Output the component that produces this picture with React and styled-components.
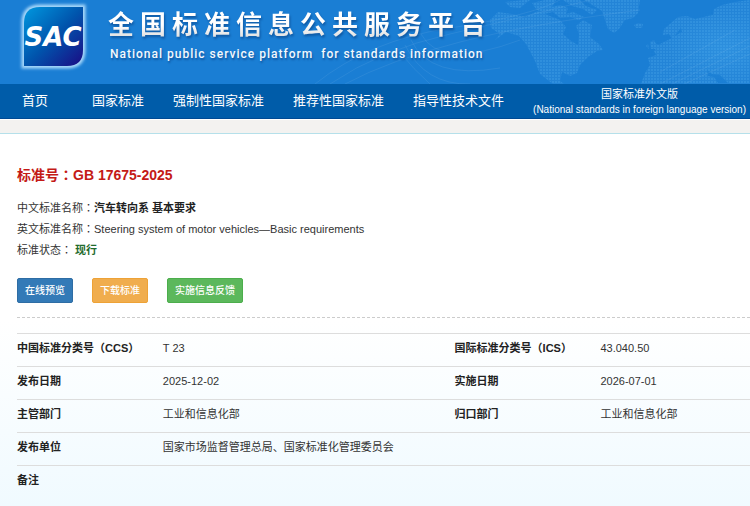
import styled, { createGlobalStyle } from "styled-components";

const GlobalStyle = createGlobalStyle`
  * {
    box-sizing: border-box;
  }
  body {
    margin: 0;
    color: #333333;
    font-family: "Liberation Sans", "Noto Sans CJK SC", sans-serif;
    font-size: 11px;
    line-height: 16px;
  }
`;
const Page = styled.div`
  min-height: 100vh;
  display: flex;
  flex-direction: column;
  overflow: hidden;
`;
const Header = styled.header`
  position: relative;
  height: 84px;
  padding-left: 20px;
  display: flex;
  align-items: flex-start;
  gap: 20px;
  background-color: #1a7ed4;
  overflow: hidden;
`;
const MapArt = styled.svg`
  position: absolute;
  top: 0;
  right: 0;
`;
const Logo = styled.svg`
  position: relative;
  flex: none;
  margin-top: 3px;
  overflow: visible;
`;
const Brand = styled.div`
  position: relative;
  flex: none;
  display: flex;
  flex-direction: column;
  padding-top: 5px;
  white-space: pre;
`;
const SiteName = styled.h1`
  margin: 0;
  font-size: 26px;
  line-height: 40px;
  font-weight: 700;
  letter-spacing: 6px;
  color: transparent;
  background-image: linear-gradient(#ffffff 50%, #dcdcdc 85%);
  background-clip: text;
  filter: drop-shadow(1px 2px 1px rgba(0, 40, 100, 0.45));
`;
const SiteNameEn = styled.p`
  margin: 0;
  padding-left: 2px;
  font-family: Roboto, "Liberation Sans", sans-serif;
  font-size: 12px;
  line-height: 18px;
  font-weight: 500;
  letter-spacing: 1px;
  color: #f4f8fc;
  text-shadow: 1px 2px 2px rgba(0, 40, 100, 0.45);
`;
const Nav = styled.nav`
  height: 35px;
  padding-left: 7px;
  display: flex;
  align-items: center;
  background-color: #005ca9;
  border-bottom: 1px solid #004a94;
`;
const NavLink = styled.a`
  flex: none;
  min-width: 70px;
  padding: 0 14px 0 15px;
  font-size: 13px;
  line-height: 18px;
  color: #ffffff;
  text-decoration: none;
  white-space: nowrap;
`;
const NavLinkStacked = styled(NavLink)`
  display: flex;
  flex-direction: column;
  align-items: center;
  padding-top: 2px;
  font-size: 11px;
  line-height: 15px;
`;
const NavSmall = styled.span`
  font-size: 10px;
`;
const Strip = styled.div`
  height: 15px;
  background-color: #f3f2f0;
  border-top: 1px solid #ffffff;
  border-bottom: 1px solid #b5e0ea;
`;
const Main = styled.main`
  flex: 1;
  padding: 31px 0 8px 17px;
  background-image: linear-gradient(#ffffff 50%, #f0faff);
`;
const Title = styled.h2`
  margin: 0 0 13px;
  font-size: 14px;
  line-height: 20px;
  color: #c41a16;
`;
const Info = styled.p`
  margin: 0;
  line-height: 21px;
`;
const Strong = styled.strong`
  color: ${(p) => (p.$active ? "#1f6b2e" : "#222222")};
`;
/* centred full-width colon */
const Colon = styled.span`
  font-family: "Noto Sans CJK TC", sans-serif;
  line-height: 1;
`;
const Actions = styled.div`
  margin-top: 17px;
  padding-bottom: 14px;
  display: flex;
  gap: 19px;
  border-bottom: 1px dashed #cccccc;
`;
const Button = styled.button`
  height: 25px;
  padding: 0 7px;
  border: 1px solid ${(p) => p.$border};
  border-radius: 2px;
  background-color: ${(p) => p.$color};
  color: #ffffff;
  font-family: inherit;
  font-size: 10px;
  line-height: 16px;
  font-weight: 500;
`;
const Table = styled.table`
  width: 100%;
  margin-top: 15px;
  border-collapse: collapse;
  table-layout: fixed;
`;
const Row = styled.tr`
  height: 33px;
  border-top: 1px solid #dddddd;
`;
const Label = styled.th`
  width: 19.9%;
  padding: 0 0 4px;
  text-align: left;
  color: #222222;
  white-space: nowrap;
`;
const Value = styled.td`
  width: ${(p) => p.$width};
  padding: 0 0 4px;
`;

const NAV = ["首页", "国家标准", "强制性国家标准", "推荐性国家标准", "指导性技术文件"];

const ROWS = [
  ["中国标准分类号（CCS）", "T 23", "国际标准分类号（ICS）", "43.040.50"],
  ["发布日期", "2025-12-02", "实施日期", "2026-07-01"],
  ["主管部门", "工业和信息化部", "归口部门", "工业和信息化部"],
  ["发布单位", "国家市场监督管理总局、国家标准化管理委员会"],
  ["备注", ""],
];

const SacLogo = () => (
  <Logo width="68" height="68" viewBox="0 0 68 68" role="img" aria-label="SAC">
    <defs>
      <linearGradient id="sac" x1="0" y1="0" x2="1" y2="1">
        <stop offset="0" stopColor="#0099e0" />
        <stop offset="0.5" stopColor="#0055ad" />
        <stop offset="1" stopColor="#1b0b84" />
      </linearGradient>
      <filter id="glow" x="-20%" y="-20%" width="140%" height="140%">
        <feGaussianBlur stdDeviation="1.6" />
      </filter>
      <path id="leaf" d="M20 4H63V47Q63 63 47 63H4V20Q4 4 20 4Z" />
    </defs>
    <use href="#leaf" fill="#a8d8fa" stroke="#a8d8fa" strokeWidth="5" filter="url(#glow)" />
    <use href="#leaf" fill="url(#sac)" />
    <text
      x="33"
      y="43"
      textAnchor="middle"
      fill="#ffffff"
      fontFamily="DejaVu Sans"
      fontSize="26"
      fontWeight="bold"
      fontStyle="italic"
    >
      SAC
    </text>
  </Logo>
);

const WorldMap = () => (
  <MapArt width="500" height="84" viewBox="250 0 500 84" aria-hidden="true">
    <defs>
      <pattern id="dots" width="3" height="3" patternUnits="userSpaceOnUse">
        <rect width="3" height="3" fill="#2384d7" />
        <rect width="2" height="2" fill="#2f8fdd" />
      </pattern>
      <radialGradient id="shine" cx="0.5" cy="0.5" r="0.5">
        <stop offset="0" stopColor="#5cc4ff" stopOpacity="0.18" />
        <stop offset="1" stopColor="#5cc4ff" stopOpacity="0" />
      </radialGradient>
    </defs>
    <g fill="url(#dots)">
      <path d="M490 20L498 12L512 14L525 17L538 11L550 16L560 20L566 27L563 34L571 41L578 45L579 34L576 26L583 20L592 25L590 37L599 44L603 50L597 51L588 57L580 65L577 73L570 76L562 72L560 81L564 84H553L540 74L535 61L526 44L519 36L506 32L495 40L500 34L491 28Z" />
      <path d="M532 3L545 0H556L552 7L560 5L568 8L566 14L573 12L584 17L579 20L570 17L560 18L553 12L544 14L536 9Z" />
      <path d="M563 0H580L586 6L597 10L592 15L583 9L572 6Z" />
      <path d="M584 0H640L638 13L633 18L625 20L619 29L614 33L608 29L605 20L602 11L594 6Z" />
      <path d="M634 25L638 23L643 24L642 28L636 28Z" />
      <path d="M650 42L654 40L656 44L660 45L658 49L651 49ZM649 49L646 46L648 44Z" />
      <path d="M664 29L671 23L678 17L687 16L695 19L708 16L713 15L714 9L722 5L735 2L750 0V84H641L645 73L650 65L648 58L656 55L654 51L660 44L670 39L676 35L682 32L681 28L676 34L672 39L669 34L663 35Z" />
      <path d="M505 2L525 0H530L520 8L510 7Z" />
    </g>
    <path d="M707 70L712 74L720 75L728 83H718L714 77L708 76Z" fill="#1a7ed4" />
    <ellipse cx="725" cy="48" rx="58" ry="36" fill="url(#shine)" />
    <g fill="none" stroke="#ffffff" strokeOpacity="0.07">
      <path d="M315 84Q370 40 450 28T560 0" />
      <path d="M330 84Q380 50 450 34T590 0" />
      <path d="M345 84Q390 60 460 42T640 10" />
      <path d="M398 50Q414 70 430 84" />
      <path d="M405 45Q425 85 470 84" />
      <path d="M411 40Q430 80 500 68" />
      <path d="M421 34Q440 70 520 40" />
      <path d="M660 84L750 38M672 84L750 46M684 84L750 54M660 72L735 30" />
    </g>
  </MapArt>
);

const App = () => {
  return (
    <Page>
      <GlobalStyle />
      <Header>
        <WorldMap />
        <SacLogo />
        <Brand>
          <SiteName>全国标准信息公共服务平台</SiteName>
          <SiteNameEn>{"National public service platform  for standards information"}</SiteNameEn>
        </Brand>
      </Header>
      <Nav>
        {NAV.map((item) => (
          <NavLink key={item} href="#">
            {item}
          </NavLink>
        ))}
        <NavLinkStacked href="#">
          国家标准外文版
          <NavSmall>(National standards in foreign language version)</NavSmall>
        </NavLinkStacked>
      </Nav>
      <Strip />
      <Main>
        <Title>
          标准号<Colon>：</Colon>GB 17675-2025
        </Title>
        <Info>
          中文标准名称<Colon>：</Colon>
          <Strong>汽车转向系 基本要求</Strong>
        </Info>
        <Info>
          英文标准名称<Colon>：</Colon>Steering system of motor vehicles—Basic requirements
        </Info>
        <Info>
          标准状态<Colon>：</Colon> <Strong $active>现行</Strong>
        </Info>
        <Actions>
          <Button $color="#337ab7" $border="#2e6da4">在线预览</Button>
          <Button $color="#f0ad4e" $border="#eea236">下载标准</Button>
          <Button $color="#5cb85c" $border="#4cae4c">实施信息反馈</Button>
        </Actions>
        <Table>
          <tbody>
            {ROWS.map(([label, value, label2, value2]) => (
              <Row key={label}>
                <Label scope="row">{label}</Label>
                <Value $width="39.8%" colSpan={label2 ? 1 : 3}>
                  {value}
                </Value>
                {label2 && <Label scope="row">{label2}</Label>}
                {label2 && <Value $width="auto">{value2}</Value>}
              </Row>
            ))}
          </tbody>
        </Table>
      </Main>
    </Page>
  );
};

export default App;
